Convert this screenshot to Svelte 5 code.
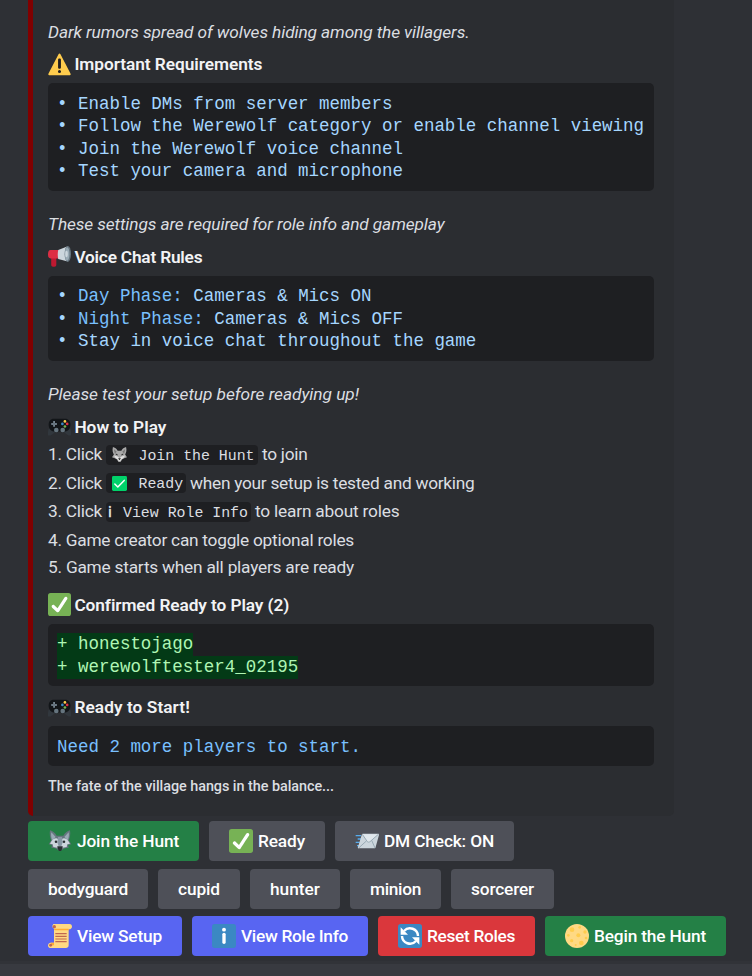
<script>
  // Spreads letters so that a label takes up the given width.
  function fit(node, width) {
    const natural = node.getBoundingClientRect().width;
    const count = node.textContent.length;
    node.style.letterSpacing = `${(width - natural) / count}px`;
  }

  const requirements = [
    'Enable DMs from server members',
    'Follow the Werewolf category or enable channel viewing',
    'Join the Werewolf voice channel',
    'Test your camera and microphone'
  ];
  const voiceRules = [
    ['Day Phase:', ' Cameras & Mics ON'],
    ['Night Phase:', ' Cameras & Mics OFF'],
    ['', 'Stay in voice chat throughout the game']
  ];
  const players = ['honestojago', 'werewolftester4_02195'];

  const rows = [
    [
      { icon: 'wolf', label: 'Join the Hunt', tone: 'green', width: 171, text: 102 },
      { icon: 'check', label: 'Ready', tone: 'grey', width: 116, text: 47 },
      { icon: 'mail', label: 'DM Check: ON', tone: 'grey', width: 179, text: 110 }
    ],
    [
      { label: 'bodyguard', tone: 'grey', width: 120, text: 80 },
      { label: 'cupid', tone: 'grey', width: 82, text: 42 },
      { label: 'hunter', tone: 'grey', width: 90, text: 50 },
      { label: 'minion', tone: 'grey', width: 91, text: 51 },
      { label: 'sorcerer', tone: 'grey', width: 103, text: 63 }
    ],
    [
      { icon: 'scroll', label: 'View Setup', tone: 'blue', width: 154, text: 85 },
      { icon: 'info', label: 'View Role Info', tone: 'blue', width: 176, text: 107 },
      { icon: 'reset', label: 'Reset Roles', tone: 'red', width: 157, text: 88 },
      { icon: 'moon', label: 'Begin the Hunt', tone: 'green', width: 181, text: 112 }
    ]
  ];
</script>

{#snippet emoji(name)}
  <svg class="emoji" viewBox="0 0 36 36" aria-hidden="true">
    {#if name === 'warning'}
      <path fill="#FFCC4D" d="M2.653 35C.811 35-.001 33.662.847 32.027L16.456 1.972c.849-1.635 2.238-1.635 3.087 0l15.609 30.056c.85 1.634.037 2.972-1.805 2.972H2.653z" />
      <path fill="#231F20" d="M15.583 28.953a2.419 2.419 0 0 1 4.837 0 2.419 2.419 0 0 1-4.837 0zm.186-18.293c0-1.302.961-2.108 2.232-2.108 1.241 0 2.233.837 2.233 2.108v11.938c0 1.271-.992 2.108-2.233 2.108-1.271 0-2.232-.807-2.232-2.108V10.660z" />
    {:else if name === 'horn'}
      <path fill="#BE1931" d="M5 17h8v14c0 2-1 3-3 3H8c-2 0-3-1-3-3z" />
      <path fill="#DD2E44" d="M4 8h14v13H4c-3 0-4-2-4-6s1-7 4-7z" />
      <path fill="#CCD6DD" d="M16 8 31 2v24l-15-4c-1-4-1-10 0-14z" />
      <ellipse cx="31" cy="14" rx="5" ry="12.500" fill="#66757F" />
      <ellipse cx="30" cy="14" rx="3.600" ry="10.500" fill="#99AAB5" />
      <ellipse cx="29" cy="14" rx="2" ry="5" fill="#CCD6DD" />
    {:else if name === 'pad'}
      <path fill="#31373D" d="M1 21h9l3 4-6 5-3 2H0v-6zM35 21h-9l-3 4 6 5 3 2h4v-6z" />
      <path fill="#121518" d="M9 6h18c5 0 8 4 8 9 0 7-4 11-9 11H10c-5 0-9-4-9-11 0-5 3-9 8-9z" />
      <path stroke="#8899A6" stroke-width="2.400" d="M9.500 9.500v9M5 14h9" />
      <circle cx="9.500" cy="14" r="1" fill="#31373D" />
      <circle cx="13" cy="23.500" r="3.600" fill="#66757F" />
      <circle cx="23" cy="23.500" r="3.600" fill="#66757F" />
      <circle cx="26.500" cy="10" r="2.100" fill="#FFCC4D" />
      <circle cx="30" cy="14" r="2.100" fill="#DD2E44" />
      <circle cx="26.500" cy="18" r="2.100" fill="#77B255" />
      <circle cx="22.500" cy="14" r="2.100" fill="#3B88C3" />
    {:else if name === 'check'}
      <rect width="36" height="36" rx="4" fill="#77B255" />
      <path fill="#FFF" d="M29.280 6.362c-1.156-.751-2.704-.422-3.458.736L14.936 23.877l-5.029-4.650c-1.014-.938-2.596-.875-3.533.138-.937 1.014-.875 2.596.139 3.533l7.209 6.666c.480.445 1.090.665 1.696.665.673 0 1.534-.282 2.099-1.139.332-.506 12.500-19.270 12.500-19.270.751-1.159.421-2.707-.737-3.458z" />
    {:else if name === 'wolf'}
      <path fill="#66757F" d="M3 2c4 1 8 4 10 8h10c2-4 6-7 10-8 1 6 0 11-2 15l4 6-5 1 1 4-6 1-5 3h-4l-5-3-6-1 1-4-5-1 4-6C3 13 2 8 3 2z" />
      <path fill="#99AAB5" d="m5 5 6.500 7L6 17C5 13 4 9 5 5zM31 5l-6.500 7 5.500 5c1-4 2-8 1-12z" />
      <path fill="#CCD6DD" d="M3 22c2-3 4-8 9-8 3 0 4 3 6 3s3-3 6-3c5 0 7 5 9 8l-4 1-1 4-6 1-2 3h-4l-2-3-6-1-1-4z" />
      <path fill="#8899A6" d="M15 12h6l1 8-2 6h-4l-2-6z" />
      <circle cx="12" cy="19" r="1.900" fill="#292F33" />
      <circle cx="24" cy="19" r="1.900" fill="#292F33" />
      <path fill="#292F33" d="M14 26h8c0 3-1 5-2.500 7h-3C15 31 14 29 14 26z" />
    {:else if name === 'mail'}
      <path stroke="#55ACEE" stroke-width="2" d="M1 10h8M4 15h5M1 20h6M3 25h4" />
      <path fill="#CCD6DD" d="M12 7h22c2 0 2 1 2 2l-5 18c-.5 2-1 2-3 2H6c-2 0-2-1-1.500-2L10 9c.5-1 1-2 2-2z" />
      <path fill="#E1E8ED" d="m11 8 8 11c1 1 2 1 3 0L35 8z" />
      <path fill="none" stroke="#99AAB5" stroke-width="1.500" d="m11 8 7.500 11c1 1 2.500 1 4 0L35 8M5.500 28.500 17 18m13 10.500L25 17" />
    {:else if name === 'scroll'}
      <path fill="#FFD983" d="M8 0h24c3 0 4 2 4 4s-2 4-4 4h-1v24c0 3-2 4-4 4H3c-2 0-3-2-3-4s2-4 4-4h5V7C6 6 6 2 8 0z" />
      <path fill="#FFAC33" d="M9 7h22v2.500H12c-2 0-3-1-3-2.500zM4 28h5v4H5z" />
      <circle cx="9.500" cy="4" r="2.500" fill="#C1694F" />
      <circle cx="4" cy="32" r="2.200" fill="#C1694F" />
      <path stroke="#C1694F" stroke-width="1.700" d="M11 14.500h17M11 18.500h17M11 22.500h17M11 26.500h17" />
    {:else if name === 'info'}
      <rect width="36" height="36" rx="4" fill="#3B88C3" />
      <circle cx="18" cy="8.500" r="2.900" fill="#FFF" />
      <rect x="15.500" y="13" width="5" height="17" rx="2.500" fill="#FFF" />
    {:else if name === 'reset'}
      <rect width="36" height="36" rx="4" fill="#3B88C3" />
      <path fill="none" stroke="#FFF" stroke-width="3.600" d="M9 10.500A12 12 0 0 1 30 18M27 25.500A12 12 0 0 1 6 18" />
      <path fill="#FFF" d="M4 5v11h11zM32 31V20H21z" />
    {:else if name === 'moon'}
      <circle cx="18" cy="18" r="18" fill="#FFD983" />
      <g fill="#FFCC4D">
        <circle cx="10.500" cy="8.500" r="3.500" /><circle cx="20" cy="17" r="3" />
        <circle cx="24.500" cy="28.500" r="3.500" /><circle cx="10" cy="25" r="2.500" />
        <circle cx="30" cy="12" r="2.500" /><circle cx="22" cy="5" r="2" />
        <circle cx="5" cy="17" r="2" /><circle cx="31.500" cy="21" r="2" />
        <circle cx="16" cy="31.500" r="1.500" />
      </g>
    {/if}
  </svg>
{/snippet}

{#snippet heading(icon, label, width)}
  <h3>{@render emoji(icon)}<span use:fit={width}>{label}</span></h3>
{/snippet}

<main>
  <article>
    <p class="note first"><em use:fit={421.5}>Dark rumors spread of wolves hiding among the villagers.</em></p>
    {@render heading('warning', 'Important Requirements', 188)}
    <div class="block">
      {#each requirements as item}
        <div class="line string">• {item}</div>
      {/each}
    </div>

    <p class="note"><em use:fit={396.5}>These settings are required for role info and gameplay</em></p>
    {@render heading('horn', 'Voice Chat Rules', 128)}
    <div class="block">
      {#each voiceRules as [key, value]}
        <div class="line string">• <span class="key">{key}</span>{value}</div>
      {/each}
    </div>

    <p class="note"><em use:fit={311}>Please test your setup before readying up!</em></p>
    {@render heading('pad', 'How to Play', 92)}
    <ol>
      <li>
        <span class="lead" use:fit={54}>1. Click</span>
        <code class="chip join">
          <svg class="mini" viewBox="0 0 16 16" aria-hidden="true">
            <path fill="#A9A9A9" d="M1 0c3 1 4 2 5 4h4c1-2 2-3 5-4 1 4 0 6-1 8l2 3-3 1-2 1-2 3H7l-2-3-2-1-3-1 2-3C1 6 0 4 1 0z" />
            <path fill="#E2E2E2" d="m2 9 4 1 2 2 2-2 4-1-2 3-2 1-1 2H7l-1-2-2-1z" />
            <path fill="#777" d="m2 2 3 3-2 2zM14 2l-3 3 2 2z" />
            <path fill="#222" d="m4 7 2 1v1L4 8zM12 7l-2 1v1l2-1zM6.500 12h3l-1.500 2z" />
          </svg>
          <span>Join the Hunt</span>
        </code>
        <span use:fit={45.5}>to join</span>
      </li>
      <li>
        <span class="lead" use:fit={54}>2. Click</span>
        <code class="chip ready">
          <svg class="mini" viewBox="0 0 16 16" aria-hidden="true">
            <rect width="16" height="16" rx="1.500" fill="#00D26A" />
            <path fill="none" stroke="#FFF" stroke-width="1.600" stroke-linecap="round" stroke-linejoin="round" d="m3 8.500 3.200 3.200L13 4.700" />
          </svg>
          <span>Ready</span>
        </code>
        <span use:fit={284.5}>when your setup is tested and working</span>
      </li>
      <li>
        <span class="lead" use:fit={54}>3. Click</span>
        <code class="chip role"><b>ℹ</b><span>View Role Info</span></code>
        <span use:fit={144.5}>to learn about roles</span>
      </li>
      <li><span use:fit={306}>4. Game creator can toggle optional roles</span></li>
      <li><span use:fit={306}>5. Game starts when all players are ready</span></li>
    </ol>

    {@render heading('check', 'Confirmed Ready to Play (2)', 214.5)}
    <div class="block">
      {#each players as player}
        <div class="line"><span class="added">+ {player}</span></div>
      {/each}
    </div>

    {@render heading('pad', 'Ready to Start!', 115.5)}
    <div class="block">
      <div class="line key">Need 2 more players to start.</div>
    </div>
    <footer><span use:fit={286}>The fate of the village hangs in the balance...</span></footer>
  </article>

  <div class="actions">
    {#each rows as row}
      <div class="row">
        {#each row as button}
          <button class={button.tone} style="width: {button.width}px">
            {#if button.icon}{@render emoji(button.icon)}{/if}
            <span use:fit={button.text}>{button.label}</span>
          </button>
        {/each}
      </div>
    {/each}
  </div>
  <div class="composer"></div>
</main>

<style>
  :global(body) {
    background: #313338;
  }
  main {
    box-sizing: border-box;
    width: 752px;
    height: 976px;
    overflow: hidden;
    display: flex;
    flex-direction: column;
    background: linear-gradient(#2e3035 961px, #313338 961px);
    color: #dbdee1;
    font: 17.3px/24px Roboto, 'Noto Sans', sans-serif;
    white-space: nowrap;
  }
  article {
    box-sizing: border-box;
    width: 646px;
    height: 816px;
    margin-left: 28px;
    padding: 20px 20px 0 15px;
    border-left: 5px solid #800000;
    border-radius: 0 0 5px 5px;
    background: #2b2d31;
    flex: none;
  }
  .note {
    margin: 21px 0 9px;
  }
  .note.first {
    margin: 0 0 8px;
  }
  h3 {
    display: flex;
    align-items: center;
    gap: 3.4px;
    height: 24px;
    margin: 0 0 7px;
    color: #f2f3f5;
    font-size: 17.3px;
    font-weight: 600;
  }
  .block + :global(h3) {
    margin-top: 9px;
  }
  .emoji {
    flex: none;
    width: 23px;
    height: 23px;
  }
  .block {
    box-sizing: border-box;
    padding: 9.5px 9px 8px;
    border-radius: 5px;
    background: #1e1f22;
    font: 17.48px/22.5px 'Liberation Mono', monospace;
    white-space: pre;
  }
  .line {
    height: 22.5px;
  }
  .string {
    color: #a5d6ff;
  }
  .key {
    color: #79c0ff;
  }
  .added {
    display: inline-block;
    height: 23.5px;
    background: #033a16;
    color: #aff5b4;
  }
  ol {
    margin: 1px 0 12px;
    padding: 0;
    list-style: none;
  }
  h3:has(+ ol) {
    margin-bottom: 1px;
  }
  li {
    display: flex;
    align-items: center;
    height: 28px;
  }
  li:nth-child(1),
  li:nth-child(3) {
    height: 29px;
  }
  li:last-child {
    height: 27px;
  }
  .lead {
    margin-right: 4px;
  }
  .chip {
    box-sizing: border-box;
    display: flex;
    align-items: center;
    height: 20px;
    margin-top: 1px;
    margin-right: 4px;
    border-radius: 4px;
    background: #1e1f22;
    font: 14.88px/20px 'Liberation Mono', monospace;
  }
  .chip span {
    padding-top: 2px;
  }
  .chip b {
    width: 9px;
    margin: 0 6px 0 2px;
    font-family: 'DejaVu Serif', serif;
  }
  .join {
    width: 152px;
  }
  .ready {
    width: 80px;
  }
  .role {
    width: 145px;
  }
  .mini {
    flex: none;
    width: 15px;
    height: 15px;
    margin: 0 11.5px 0 6px;
  }
  footer {
    height: 20px;
    margin-top: 11px;
    font-size: 14.4px;
    font-weight: 500;
    line-height: 20px;
  }
  .actions {
    display: flex;
    flex-direction: column;
    gap: 7.5px;
    margin: 5px 0 8px 28px;
  }
  .row {
    display: flex;
    gap: 10px;
  }
  button {
    box-sizing: border-box;
    display: flex;
    align-items: center;
    gap: 5px;
    height: 40px;
    padding: 0 0 0 20px;
    border: 0;
    border-radius: 4px;
    color: #fff;
    font: 500 17.3px/24px Roboto, 'Noto Sans', sans-serif;
    white-space: nowrap;
  }
  button .emoji {
    width: 24px;
    height: 24px;
  }
  .green {
    background: #248046;
  }
  .grey {
    background: #4e5058;
  }
  .blue {
    background: #5865f2;
  }
  .red {
    background: #da373c;
  }
  .composer {
    flex: 1;
    background: #383a40;
  }
</style>
